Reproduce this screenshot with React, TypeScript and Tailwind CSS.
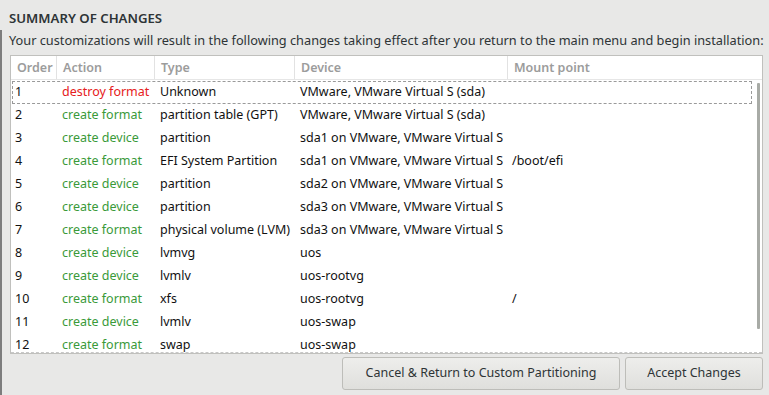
import React from "react";

type Row = { o: string; a: string; t: string; d: string; m: string };

const rows: Row[] = [
  { o: "1", a: "destroy format", t: "Unknown", d: "VMware, VMware Virtual S (sda)", m: "" },
  { o: "2", a: "create format", t: "partition table (GPT)", d: "VMware, VMware Virtual S (sda)", m: "" },
  { o: "3", a: "create device", t: "partition", d: "sda1 on VMware, VMware Virtual S", m: "" },
  { o: "4", a: "create format", t: "EFI System Partition", d: "sda1 on VMware, VMware Virtual S", m: "/boot/efi" },
  { o: "5", a: "create device", t: "partition", d: "sda2 on VMware, VMware Virtual S", m: "" },
  { o: "6", a: "create device", t: "partition", d: "sda3 on VMware, VMware Virtual S", m: "" },
  { o: "7", a: "create format", t: "physical volume (LVM)", d: "sda3 on VMware, VMware Virtual S", m: "" },
  { o: "8", a: "create device", t: "lvmvg", d: "uos", m: "" },
  { o: "9", a: "create device", t: "lvmlv", d: "uos-rootvg", m: "" },
  { o: "10", a: "create format", t: "xfs", d: "uos-rootvg", m: "/" },
  { o: "11", a: "create device", t: "lvmlv", d: "uos-swap", m: "" },
  { o: "12", a: "create format", t: "swap", d: "uos-swap", m: "" },
];

export default function App() {
  return (
    <div
      className="w-[769px] h-[395px] bg-[#e8e8e7] overflow-hidden flex"
      style={{ fontFamily: '"Noto Sans", "DejaVu Sans", sans-serif' }}
    >
      <div className="w-[2px] mt-[30px] bg-[#7d7d7d] shrink-0" />
      <div className="flex-1 min-w-0 flex flex-col pl-[7px] pr-[6px]">
        <div className="h-[34px] pt-[8px] text-[13.2px] font-semibold text-[#2e3436] leading-[20px]">
          SUMMARY OF CHANGES
        </div>
        <div className="h-[21px] text-[12.75px] text-[#2e3436] leading-[13px] whitespace-nowrap overflow-visible">
          Your customizations will result in the following changes taking effect after you return to the main menu and begin installation:
        </div>
        <div className="ml-[1px] h-[299px] bg-white border border-[#c0c0bd] flex flex-col relative overflow-hidden">
          <div className="flex h-[24px] shrink-0 text-[12.5px] text-[#9c9c9c] font-semibold leading-[24px] border-b border-[#e6e6e6]">
            <div className="w-[46px] pl-[6px] border-r border-[#e2e2e2]">Order</div>
            <div className="w-[98px] pl-[6px] border-r border-[#e2e2e2]">Action</div>
            <div className="w-[140px] pl-[6px] border-r border-[#e2e2e2]">Type</div>
            <div className="w-[213px] pl-[6px] border-r border-[#e2e2e2]">Device</div>
            <div className="flex-1 pl-[6px]">Mount point</div>
          </div>
          <div className="flex flex-col pt-[1px]">
            {rows.map((r, i) => (
              <div
                key={r.o}
                className={
                  "flex h-[23px] items-center text-[12.5px] text-[#111111] whitespace-nowrap ml-[1px] mr-[10px] " +
                  (i === 0 ? "border border-dashed border-[#9a9a9a]" : "border border-transparent")
                }
              >
                <div className="w-[49px] pl-[2px]">{r.o}</div>
                <div
                  className={
                    "w-[98px] " + (r.a.startsWith("destroy") ? "text-[#e62020]" : "text-[#3a9a3a]")
                  }
                >
                  {r.a}
                </div>
                <div className="w-[140px]">{r.t}</div>
                <div className="w-[212px]">{r.d}</div>
                <div className="flex-1">{r.m}</div>
              </div>
            ))}
          </div>
          <div className="absolute right-[2px] top-[27px] w-[3px] h-[246px] bg-[#a8aba6] rounded-[1px]" />
          <div className="absolute left-0 right-0 bottom-0 h-0 border-b border-dashed border-[#c8c8c8]" />
        </div>
        <div className="flex justify-end gap-[5px] mt-[3px]">
          <button className="w-[278px] h-[33px] rounded-[3px] border border-[#bdbdb9] bg-gradient-to-b from-[#eeeeec] to-[#dfdfdc] text-[12.5px] text-[#2e3436]">
            Cancel &amp; Return to Custom Partitioning
          </button>
          <button className="w-[138px] h-[33px] rounded-[3px] border border-[#bdbdb9] bg-gradient-to-b from-[#eeeeec] to-[#dfdfdc] text-[12.5px] text-[#2e3436]">
            Accept Changes
          </button>
        </div>
      </div>
    </div>
  );
}
